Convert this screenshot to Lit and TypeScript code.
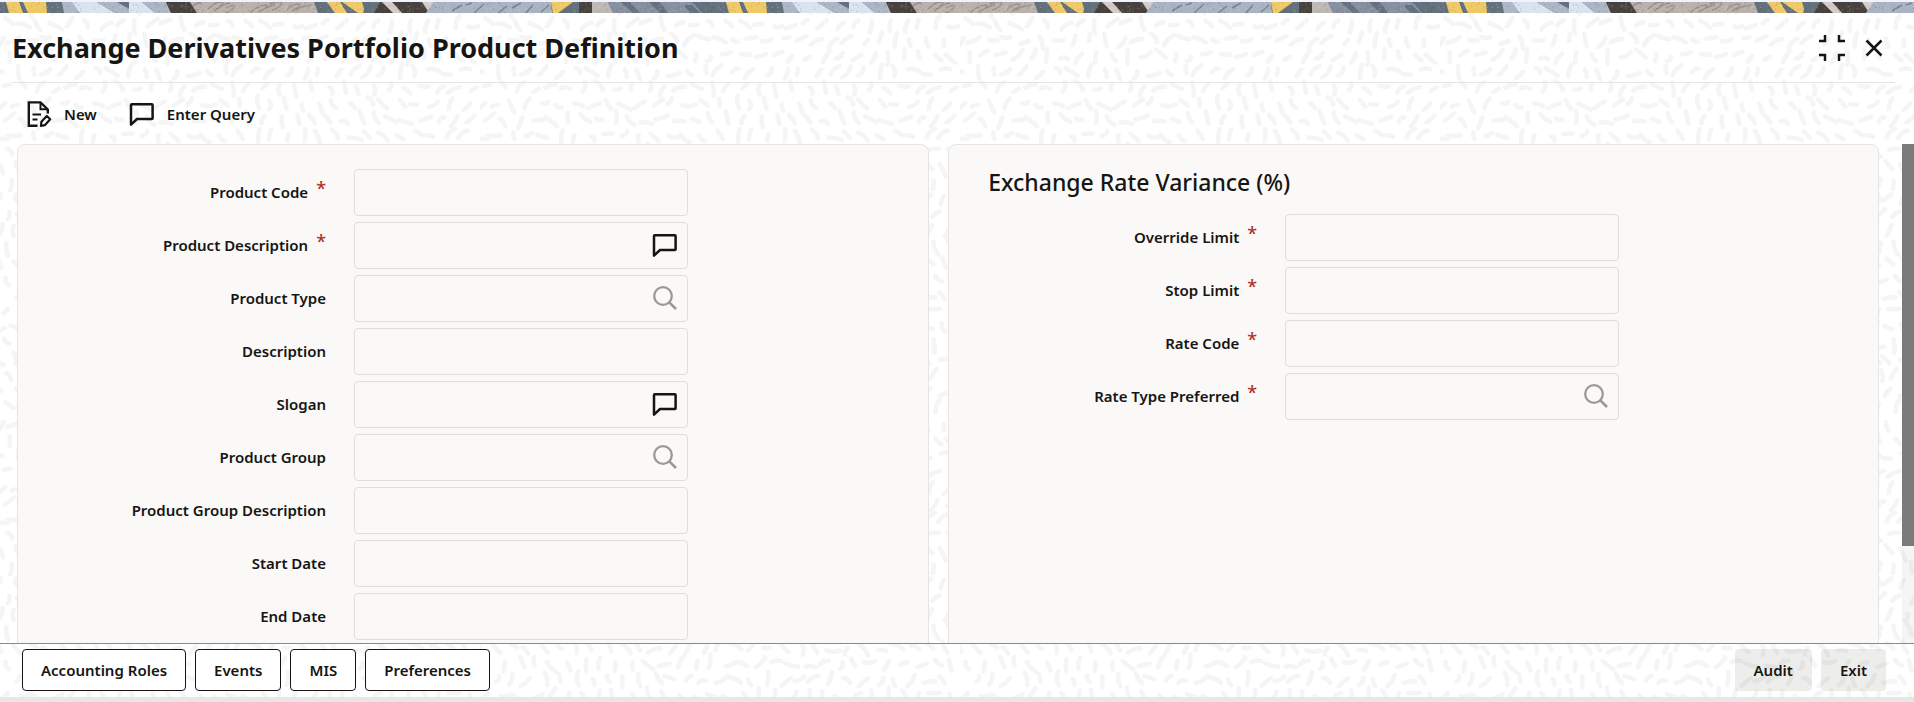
import { LitElement, html, svg, css } from "lit";
import { customElement } from "lit/decorators.js";

interface Field {
  id: string;
  label: string;
  required?: boolean;
  icon?: "note" | "search";
}

const PRODUCT_FIELDS: Field[] = [
  { id: "product-code", label: "Product Code", required: true },
  { id: "product-description", label: "Product Description", required: true, icon: "note" },
  { id: "product-type", label: "Product Type", icon: "search" },
  { id: "description", label: "Description" },
  { id: "slogan", label: "Slogan", icon: "note" },
  { id: "product-group", label: "Product Group", icon: "search" },
  { id: "product-group-description", label: "Product Group Description" },
  { id: "start-date", label: "Start Date" },
  { id: "end-date", label: "End Date" },
];

const VARIANCE_FIELDS: Field[] = [
  { id: "override-limit", label: "Override Limit", required: true },
  { id: "stop-limit", label: "Stop Limit", required: true },
  { id: "rate-code", label: "Rate Code", required: true },
  { id: "rate-type", label: "Rate Type Preferred", required: true, icon: "search" },
];

const noteIcon = html`<svg class="icon" viewBox="0 0 26 26" aria-hidden="true">
  <path d="M2 4 Q2 3.2 2.8 3.2 H22.8 Q23.6 3.2 23.6 4 V17.2 Q23.6 18 22.8 18 H8 L2 23.6 Z" fill="none" stroke="currentColor" stroke-width="2.5" stroke-linejoin="round"/>
</svg>`;

const searchIcon = html`<svg class="icon" viewBox="0 0 26 26" aria-hidden="true">
  <circle cx="11" cy="11" r="8.8" fill="none" stroke="currentColor" stroke-width="2.3"/>
  <path d="M17.3 17.3 L24 24" fill="none" stroke="currentColor" stroke-width="2.6"/>
</svg>`;

const newIcon = html`<svg class="icon" viewBox="0 0 26 26" aria-hidden="true">
  <g fill="none" stroke="currentColor" stroke-width="2.4">
    <path d="M11.5 24.8 H2.8 V1.4 H14.5 L21.8 8.4 V12.5"/>
    <path d="M14.5 1.5 V8.3 H21.5" stroke-width="2"/>
    <path d="M6.5 13.5 H15 M6.5 18.5 H11.5" stroke-width="2"/>
    <path d="M15 24.8 L15.4 20.8 L20.8 15 L24.2 18.2 L18.8 24.2 Z" stroke-width="2.2" stroke-linejoin="round"/>
  </g>
</svg>`;

const collapseIcon = html`<svg class="icon" viewBox="0 0 26 26" aria-hidden="true">
  <path d="M0 6 H6 V0 M20 0 V6 H26 M0 20 H6 V26 M20 26 V20 H26" fill="none" stroke="currentColor" stroke-width="2.5"/>
</svg>`;

const closeIcon = html`<svg class="icon" viewBox="0 0 26 26" aria-hidden="true">
  <path d="M5.5 5.5 L20.5 20.5 M20.5 5.5 L5.5 20.5" fill="none" stroke="currentColor" stroke-width="2.5"/>
</svg>`;

/** Small repeatable random source so the decoration is stable between renders. */
function seeded(seed: number) {
  let s = seed;
  return () => {
    s = (s * 16807) % 2147483647;
    return s / 2147483647;
  };
}

const TILE_W = 480;
const TILE_H = 384;

/** Short curved dashes that follow a slowly turning direction field. */
function dashPaths(): string {
  const rnd = seeded(77);
  const tau = Math.PI * 2;
  const step = 16;
  let d = "";
  for (let gy = 0; gy < TILE_H / step; gy++) {
    for (let gx = 0; gx < TILE_W / step; gx++) {
      const x = gx * step + (gy % 2 ? step / 2 : 0) + (rnd() - 0.5) * 6;
      const y = gy * step + step / 2 + (rnd() - 0.5) * 6;
      const u = (x / TILE_W) * tau;
      const v = (y / TILE_H) * tau;
      const a =
        1.6 +
        1.3 * Math.sin(2 * u + Math.cos(v)) +
        1.2 * Math.cos(2 * v + 1.4 * Math.sin(u)) +
        Math.sin(3 * u - v) +
        (rnd() - 0.5) * 0.8;
      const l = 3 + rnd() * 4;
      const dx = Math.cos(a) * l;
      const dy = Math.sin(a) * l;
      const bend = (rnd() - 0.5) * 6;
      const cx = x - Math.sin(a) * bend;
      const cy = y + Math.cos(a) * bend;
      d += `M${(x - dx).toFixed(1)} ${(y - dy).toFixed(1)}Q${cx.toFixed(1)} ${cy.toFixed(1)} ${(x + dx).toFixed(1)} ${(y + dy).toFixed(1)}`;
    }
  }
  return d;
}

function speckles(seed: number, count: number): string {
  const rnd = seeded(seed);
  let d = "";
  for (let i = 0; i < count; i++) {
    d += `M${(rnd() * 720).toFixed(1)} ${(rnd() * 11).toFixed(1)}h1`;
  }
  return d;
}

const BANNER_SHAPES: [string, string][] = [
  ["#efc967", "6,0 19,0 23,11 9,11"],
  ["#efc967", "23,0 46,0 47,11 28,11"],
  ["#adb6c4", "62,0 75,0 86,11 64,11"],
  ["#dbe2f0", "72,0 97,0 115,11 80,11"],
  ["#adb6c4", "97,0 129,0 129,11 115,11"],
  ["#64717d", "117,0 129,0 129,7"],
  ["#dbe2f0", "129,0 142,0 155,11 129,11"],
  ["#adb6c4", "142,0 166,0 171,11 155,11"],
  ["#48423f", "166,0 190,0 197,11 171,11"],
  ["#b9b1ab", "190,0 314,0 318,11 197,11"],
  ["#efc967", "327,0 340,0 347,11 335,11"],
  ["#efc967", "342,0 362,0 364,7 363,11 358,11"],
  ["#48423f", "380,0 433,0 426,11 374,11"],
  ["#d3ccc8", "382,0 392,0 402,11 393,11"],
  ["#d3ccc8", "422,0 434,0 428,9"],
  ["#a9b3c3", "434,0 551,0 552,11 426,11"],
  ["#efc967", "551,0 573,0 558,11 553,11"],
  ["#48423f", "579,0 592,0 592,11 579,11"],
  ["#bdb8b3", "592,0 608,0 613,11 592,11"],
  ["#8790a1", "608,0 692,0 702,11 613,11"],
  ["#64717d", "621,0 630,0 640,11 633,11"],
  ["#64717d", "649,0 660,0 668,11 660,11"],
  ["#64717d", "684,3 692,3 700,11 690,11"],
];

@customElement("app-root")
export class AppRoot extends LitElement {
  static styles = css`
    :host {
      display: flex;
      flex-direction: column;
      position: relative;
      isolation: isolate;
      height: 100vh;
      overflow: hidden;
      background: #ffffff;
      color: #161513;
      font: 600 15px/20px "Noto Sans", "Open Sans", sans-serif;
    }
    * {
      box-sizing: border-box;
    }
    .texture {
      position: absolute;
      inset: 0;
      width: 100%;
      height: 100%;
      z-index: -1;
    }
    .banner {
      flex: none;
      display: block;
      width: 100%;
      height: 13px;
      border-top: 2px solid #f0f3fc;
    }
    .header {
      flex: none;
      display: flex;
      align-items: center;
      justify-content: space-between;
      height: 70px;
      margin: 0 19px 0 12px;
      border-bottom: 1px solid #e6e5e4;
    }
    .title {
      margin: 0;
      font-size: 27px;
      line-height: 36px;
      font-weight: 700;
    }
    .window-actions {
      display: flex;
      gap: 16px;
      padding-right: 8px;
    }
    button {
      margin: 0;
      font: inherit;
      color: inherit;
      cursor: pointer;
    }
    .icon {
      display: block;
      flex: none;
      width: 26px;
      height: 26px;
      overflow: visible;
    }
    .plain {
      display: flex;
      align-items: center;
      gap: 12px;
      padding: 0;
      border: 0;
      background: none;
    }
    .toolbar {
      flex: none;
      display: flex;
      align-items: center;
      gap: 32px;
      height: 61px;
      padding: 0 26px;
    }
    .body {
      flex: 1;
      min-height: 0;
      display: flex;
    }
    .scroller {
      flex: 1;
      min-width: 0;
      overflow-y: auto;
      scrollbar-width: none;
      padding: 0 23px 19px 17px;
    }
    .track {
      flex: none;
      width: 12px;
      background: rgba(0, 0, 0, 0.04);
    }
    .thumb {
      height: 80.5%;
      background: #7a7a7a;
    }
    .panels {
      display: grid;
      grid-template-columns: minmax(0, 49fr) minmax(0, 50fr);
      gap: 19px;
      min-height: 600px;
    }
    .panel {
      min-width: 0;
      padding: 24px 39px;
      border: 1px solid #e6e5e4;
      border-radius: 8px;
      background: #faf9f7;
    }
    .panel-title {
      margin: 0 0 19px;
      font-size: 23px;
      line-height: 26px;
      font-weight: 500;
    }
    .fields {
      display: grid;
      gap: 6px;
    }
    .row {
      display: grid;
      grid-template-columns: minmax(0, 269px) minmax(0, 334px);
      column-gap: 28px;
      align-items: center;
    }
    .label {
      display: flex;
      justify-content: flex-end;
      gap: 8px;
      padding-bottom: 2px;
    }
    .star {
      color: #b3311f;
      font-size: 18px;
      line-height: 12px;
      font-weight: 500;
    }
    .control {
      position: relative;
    }
    .input {
      display: block;
      width: 100%;
      height: 47px;
      padding: 0 48px 0 12px;
      border: 1px solid #dfdedc;
      border-radius: 4px;
      background: transparent;
      color: inherit;
      font: inherit;
    }
    .field-action {
      position: absolute;
      right: 10px;
      top: 10px;
    }
    .search {
      color: #9b9896;
    }
    .footer {
      flex: none;
      display: flex;
      justify-content: space-between;
      padding: 5px 28px 6px 22px;
      border-top: 1px solid #8b8a89;
      border-bottom: 5px solid #e7e7e7;
    }
    .group {
      display: flex;
      gap: 9px;
    }
    .button {
      height: 42px;
      padding: 0 18px;
      border: 1px solid #161513;
      border-radius: 4px;
      background: #ffffff;
    }
    .soft {
      border-color: transparent;
      background: rgba(22, 21, 19, 0.08);
    }
  `;

  private field(f: Field) {
    return html`<div class="row">
      <label class="label" for=${f.id}>${f.label}${f.required ? html`<span class="star">*</span>` : ""}</label>
      <div class="control">
        <input class="input" id=${f.id} type="text" ?required=${f.required} />
        ${f.icon === "note"
          ? html`<button class="plain field-action" aria-label="Expand">${noteIcon}</button>`
          : f.icon === "search"
            ? html`<button class="plain field-action search" aria-label="Search">${searchIcon}</button>`
            : ""}
      </div>
    </div>`;
  }

  render() {
    return html`
      <svg class="texture" aria-hidden="true">
        <defs>
          <pattern id="dashes" width=${TILE_W} height=${TILE_H} patternUnits="userSpaceOnUse">
            <path d=${dashPaths()} fill="none" stroke="#f5f5f5" stroke-width="4.6" stroke-linecap="round"/>
          </pattern>
        </defs>
        <rect width="100%" height="100%" fill="url(#dashes)"/>
      </svg>
      <svg class="banner" aria-hidden="true">
        <defs>
          <pattern id="strip" width="720" height="11" patternUnits="userSpaceOnUse">
            <rect width="720" height="11" fill="#64717d"/>
            ${BANNER_SHAPES.map(([fill, points]) => svg`<polygon fill=${fill} points=${points}/>`)}
            <path fill="none" stroke="#9a928c" stroke-width="1.5" d="M193 4 q6 -5 9 -2 M208 7 q8 -8 14 -7 q3 2 -8 9 q9 -7 16 -8 M226 6 q6 -4 8 -2 q-2 6 -9 7 M250 11 q8 -8 16 -8 q4 2 -8 7 q8 -4 17 -8 M270 2 q8 -4 12 -1 q-2 5 -10 7 M286 9 q5 -7 12 -7 q4 2 -6 7 q10 -5 19 -6"/>
            <path fill="none" stroke="#7a8594" stroke-width="1.5" d="M452 9 l10 -6 M474 11 l10 -9 M498 11 l9 -7 M512 6 l9 -5 M526 11 l7 -8 M541 10 l8 -7 M466 3 l6 -2"/>
            <path stroke="#ffffff" stroke-opacity="0.22" stroke-width="1" d=${speckles(5, 420)}/>
            <path stroke="#2a2522" stroke-opacity="0.22" stroke-width="1" d=${speckles(91, 300)}/>
          </pattern>
        </defs>
        <rect width="100%" height="11" fill="url(#strip)"/>
      </svg>
      <header class="header">
        <h1 class="title">Exchange Derivatives Portfolio Product Definition</h1>
        <div class="window-actions">
          <button class="plain" aria-label="Restore">${collapseIcon}</button>
          <button class="plain" aria-label="Close">${closeIcon}</button>
        </div>
      </header>
      <nav class="toolbar">
        <button class="plain">${newIcon}New</button>
        <button class="plain">${noteIcon}Enter Query</button>
      </nav>
      <main class="body">
        <div class="scroller">
          <div class="panels">
            <section class="panel">
              <div class="fields">${PRODUCT_FIELDS.map((f) => this.field(f))}</div>
            </section>
            <section class="panel">
              <h2 class="panel-title">Exchange Rate Variance (%)</h2>
              <div class="fields">${VARIANCE_FIELDS.map((f) => this.field(f))}</div>
            </section>
          </div>
        </div>
        <div class="track"><div class="thumb"></div></div>
      </main>
      <footer class="footer">
        <div class="group">
          <button class="button">Accounting Roles</button>
          <button class="button">Events</button>
          <button class="button">MIS</button>
          <button class="button">Preferences</button>
        </div>
        <div class="group">
          <button class="button soft">Audit</button>
          <button class="button soft">Exit</button>
        </div>
      </footer>
    `;
  }
}
